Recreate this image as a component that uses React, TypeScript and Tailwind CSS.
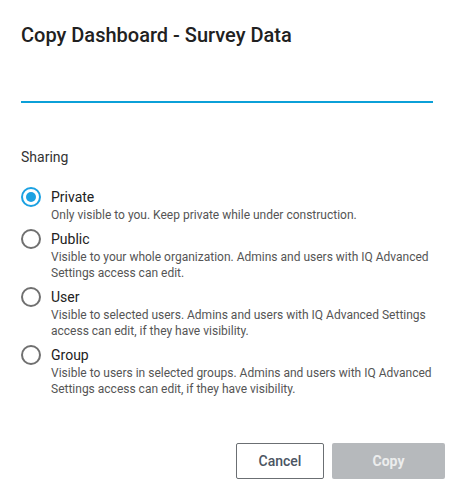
import { useState } from "react";

const OPTIONS = [
  {
    id: "private",
    label: "Private",
    desc: "Only visible to you. Keep private while under construction.",
  },
  {
    id: "public",
    label: "Public",
    desc: "Visible to your whole organization. Admins and users with IQ Advanced Settings access can edit.",
  },
  {
    id: "user",
    label: "User",
    desc: "Visible to selected users. Admins and users with IQ Advanced Settings access can edit, if they have visibility.",
  },
  {
    id: "group",
    label: "Group",
    desc: "Visible to users in selected groups. Admins and users with IQ Advanced Settings access can edit, if they have visibility.",
  },
];

function Radio({ checked }: { checked: boolean }) {
  return (
    <span
      className={`flex h-5 w-5 shrink-0 items-center justify-center rounded-full border-2 ${
        checked ? "border-[#1ba1e2]" : "border-[#707070]"
      }`}
    >
      {checked && <span className="h-[10px] w-[10px] rounded-full bg-[#1ba1e2]" />}
    </span>
  );
}

export default function App() {
  const [sharing, setSharing] = useState("private");
  const [name, setName] = useState("");

  return (
    <div className="h-[489px] w-[454px] bg-white font-['Roboto',sans-serif]">
      <div className="pl-[21px] pt-[21px]">
        {/* Title */}
        <h2 className="text-[20px] leading-[28px] font-medium text-[#212121]">
          Copy Dashboard - Survey Data
        </h2>

        {/* Name field */}
        <input
          value={name}
          onChange={(e) => setName(e.target.value)}
          className="mt-[22px] block h-[32px] w-[412px] border-b-2 border-[#0ba0d8] text-sm outline-none"
        />

        {/* Sharing */}
        <div className="mt-[44px] text-sm leading-5 text-[#333]">Sharing</div>

        <div className="mt-5 flex flex-col gap-[6px] pr-[20px]">
          {OPTIONS.map((o) => (
            <label
              key={o.id}
              className="flex cursor-pointer items-start gap-[10px]"
              onClick={() => setSharing(o.id)}
            >
              <span className="flex h-5 items-center">
                <Radio checked={sharing === o.id} />
              </span>
              <span className="flex flex-col">
                <span className="text-sm leading-5 text-[#222]">{o.label}</span>
                <span className="text-xs leading-4 text-[#555]">{o.desc}</span>
              </span>
            </label>
          ))}
        </div>
      </div>

      {/* Actions */}
      <div className="mt-[46px] flex justify-end gap-2 pr-[9px]">
        <button className="h-9 w-[88px] rounded-[2px] border border-[#6b6f73] bg-white text-sm font-medium text-[#4b5563]">
          Cancel
        </button>
        <button
          disabled
          className="h-9 w-[113px] rounded-[2px] bg-[#b6b9bc] text-sm font-bold text-[#eceded]"
        >
          Copy
        </button>
      </div>
    </div>
  );
}
